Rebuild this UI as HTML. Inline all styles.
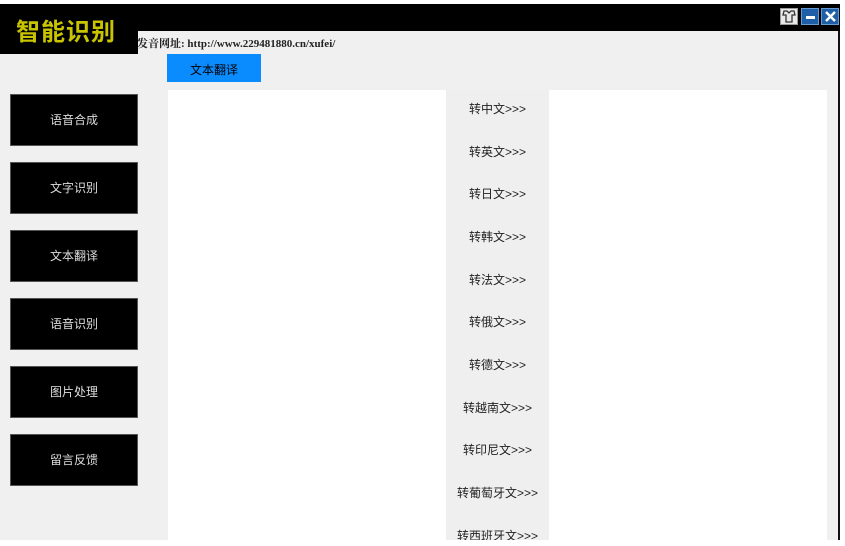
<!DOCTYPE html>
<html><head><meta charset="utf-8"><style>
*{margin:0;padding:0;box-sizing:border-box}
body{width:845px;height:546px;background:#fff;position:relative;overflow:hidden;font-family:"Liberation Sans","Noto Sans CJK SC",sans-serif}
.win{position:absolute;left:0;top:4px;width:840px;height:536px;background:#f0f0f0;border-right:2px solid #111}
.top{position:absolute;left:0;top:4px;width:840px;height:27px;background:#000}
.logo{position:absolute;left:0;top:4px;width:138px;height:50px;background:#000;color:#c8c400;font-size:24px;font-weight:bold;line-height:52px;padding-left:16px;letter-spacing:1px;font-family:"Noto Sans CJK SC",sans-serif}
.url{position:absolute;left:137px;top:35px;font-size:11px;font-weight:bold;color:#222;font-family:"Liberation Serif","Noto Serif CJK SC",serif}
.tab{position:absolute;left:167px;top:54px;width:94px;height:28px;background:#0a8cff;color:#000;font-size:12px;text-align:center;line-height:32px}
.btn{position:absolute;left:10px;width:128px;height:52px;background:#000;border:1px solid #555;color:#ddd;font-size:12px;text-align:center;line-height:50px}
.panel{position:absolute;left:168px;top:90px;width:659px;height:450px;background:#fff}
.mid{position:absolute;left:446px;top:90px;width:103px;height:450px;background:#efefef;overflow:hidden}
.mid div{position:absolute;left:0;width:103px;text-align:center;font-size:12px;color:#222}
.ic{position:absolute;top:8px;width:18px;height:17px}
</style></head><body>
<div class="win"></div>
<div class="top"></div>
<div class="logo">智能识别</div>
<div class="url">发音网址: http://www.229481880.cn/xufei/</div>
<div class="tab">文本翻译</div>
<div class="btn" style="top:94px">语音合成</div>
<div class="btn" style="top:162px">文字识别</div>
<div class="btn" style="top:230px">文本翻译</div>
<div class="btn" style="top:298px">语音识别</div>
<div class="btn" style="top:366px">图片处理</div>
<div class="btn" style="top:434px">留言反馈</div>
<div class="panel"></div>
<div class="mid">
<div style="top:10px">转中文&gt;&gt;&gt;</div>
<div style="top:53px">转英文&gt;&gt;&gt;</div>
<div style="top:95px">转日文&gt;&gt;&gt;</div>
<div style="top:138px">转韩文&gt;&gt;&gt;</div>
<div style="top:181px">转法文&gt;&gt;&gt;</div>
<div style="top:223px">转俄文&gt;&gt;&gt;</div>
<div style="top:266px">转德文&gt;&gt;&gt;</div>
<div style="top:309px">转越南文&gt;&gt;&gt;</div>
<div style="top:351px">转印尼文&gt;&gt;&gt;</div>
<div style="top:394px">转葡萄牙文&gt;&gt;&gt;</div>
<div style="top:437px">转西班牙文&gt;&gt;&gt;</div>
</div>
<div class="ic" style="left:780px;background:#e8e8e8;border:1px solid #999">
<svg width="16" height="15" viewBox="0 0 16 15"><path d="M3 2h3l2 2 2-2h3l1 4h-3v7H5V6H2z" fill="none" stroke="#333" stroke-width="1.3"/></svg></div>
<div class="ic" style="left:801px;background:#1f5fa8;border:1px solid #6a9ad0">
<svg width="16" height="15"><rect x="4" y="7" width="9" height="3" fill="#fff"/></svg></div>
<div class="ic" style="left:821px;background:#1f5fa8;border:1px solid #6a9ad0">
<svg width="16" height="15"><path d="M4 3l9 9M13 3l-9 9" stroke="#fff" stroke-width="2.5"/></svg></div>
</body></html>
